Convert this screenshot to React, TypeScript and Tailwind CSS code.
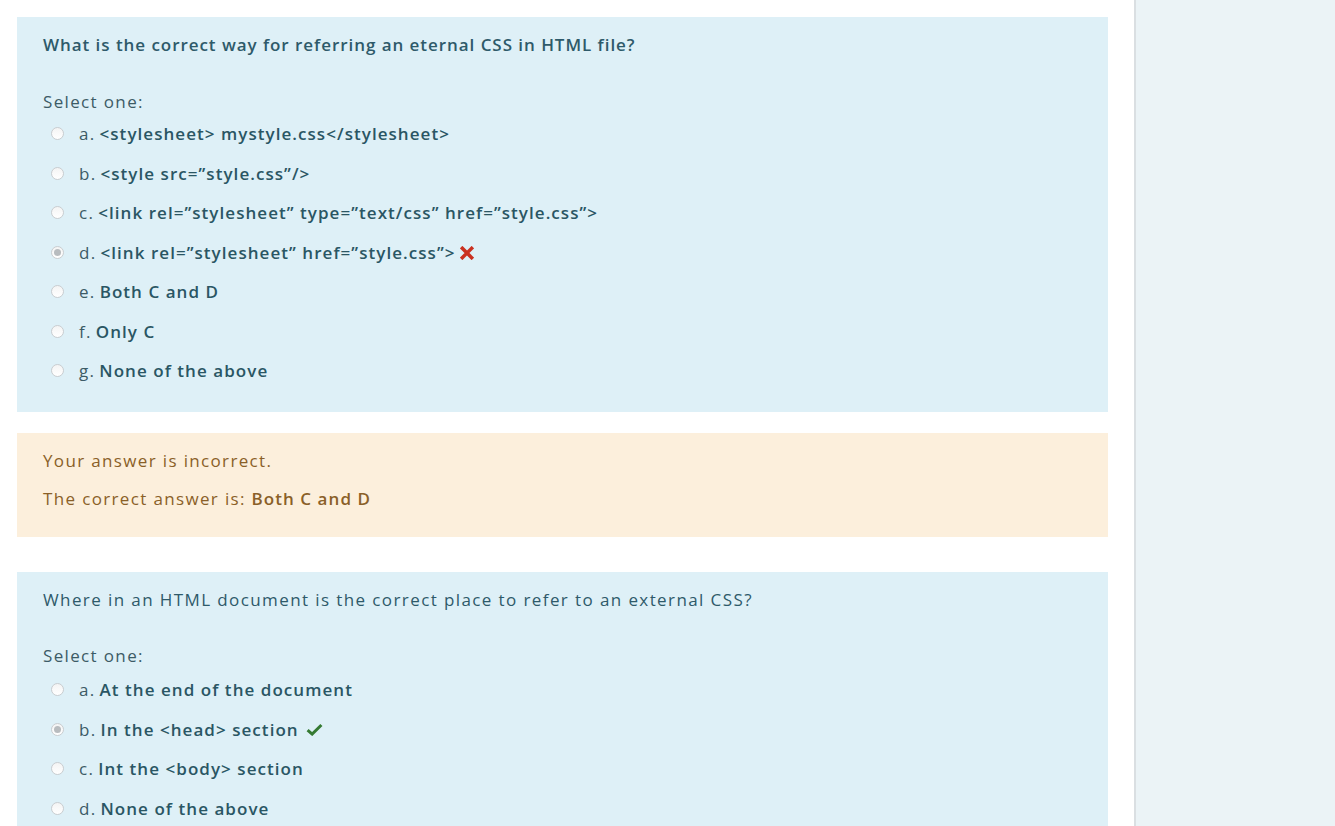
import React from "react";

type Option = { key: string; text: string; checked?: boolean; mark?: "wrong" | "right" };

const q1: Option[] = [
  { key: "a.", text: "<stylesheet> mystyle.css</stylesheet>" },
  { key: "b.", text: "<style src=”style.css”/>" },
  { key: "c.", text: "<link rel=”stylesheet” type=”text/css” href=”style.css”>" },
  { key: "d.", text: "<link rel=”stylesheet” href=”style.css”>", checked: true, mark: "wrong" },
  { key: "e.", text: "Both C and D" },
  { key: "f.", text: "Only C" },
  { key: "g.", text: "None of the above" },
];

const q2: Option[] = [
  { key: "a.", text: "At the end of the document" },
  { key: "b.", text: "In the <head> section", checked: true, mark: "right" },
  { key: "c.", text: "Int the <body> section" },
  { key: "d.", text: "None of the above" },
];

function Radio({ checked }: { checked?: boolean }) {
  return (
    <span className="flex h-[13px] w-[13px] shrink-0 items-center justify-center rounded-full border border-[#c9cdd0] bg-gradient-to-b from-[#f4f4f4] to-white">
      {checked && <span className="h-[7px] w-[7px] rounded-full bg-[#b8bcbf]" />}
    </span>
  );
}

function Cross() {
  return (
    <svg width="14" height="14" viewBox="0 0 12 12" className="ml-[5px] mt-[2px]">
      <path d="M2 2 L10 10 M10 2 L2 10" stroke="#ca3120" strokeWidth="3" strokeLinecap="square" />
    </svg>
  );
}

function Check() {
  return (
    <svg width="17" height="13" viewBox="0 0 16 12" className="ml-[7px] mt-[1px]">
      <path d="M1.5 6.5 L5.8 10.3 L14.5 1.8" stroke="#357a32" strokeWidth="2.8" fill="none" />
    </svg>
  );
}

function Answers({ options }: { options: Option[] }) {
  return (
    <div className="flex flex-col">
      {options.map((o) => (
        <div key={o.key} className="flex h-[39.5px] items-center pl-[8px]">
          <Radio checked={o.checked} />
          <span className="ml-[15px] tracking-[1.3px] text-[#3c5b66]">{o.key}</span>
          <span className="ml-[4px] font-semibold tracking-[1.05px] text-[#2a5664]">{o.text}</span>
          {o.mark === "wrong" && <Cross />}
          {o.mark === "right" && <Check />}
        </div>
      ))}
    </div>
  );
}

export default function App() {
  return (
    <div
      className="flex h-[826px] w-full overflow-hidden bg-white text-[17px]"
      style={{ fontFamily: "'Open Sans', 'Noto Sans', sans-serif" }}
    >
      <main className="flex w-[1134px] shrink-0 flex-col pl-[17px] pr-[26px] pt-[17px]">
        {/* Question 1 */}
        <section className="flex h-[395px] shrink-0 flex-col bg-[#def0f7] px-[26px] pt-[28px]">
          <h2 className="leading-[0px] font-semibold tracking-[0.95px] text-[#2e5a6a]">
            What is the correct way for referring an eternal CSS in HTML file?
          </h2>
          <p className="mt-[57px] leading-[0px] tracking-[1.35px] text-[#3c5b66]">Select one:</p>
          <div className="mt-[12px]">
            <Answers options={q1} />
          </div>
        </section>

        {/* Feedback */}
        <section className="mt-[21px] flex h-[104px] shrink-0 flex-col bg-[#fcefdc] px-[26px] pt-[28px] tracking-[1.35px] text-[#8a5f28]">
          <p className="leading-[0px]">Your answer is incorrect.</p>
          <p className="mt-[38px] leading-[0px]">
            The correct answer is: <span className="font-semibold tracking-[1.05px]">Both C and D</span>
          </p>
        </section>

        {/* Question 2 */}
        <section className="mt-[35px] flex min-h-0 flex-1 flex-col bg-[#def0f7] px-[26px] pt-[28px]">
          <h2 className="leading-[0px] tracking-[1.4px] text-[#2e5a6a]">
            Where in an HTML document is the correct place to refer to an external CSS?
          </h2>
          <p className="mt-[56px] leading-[0px] tracking-[1.35px] text-[#3c5b66]">Select one:</p>
          <div className="mt-[14px]">
            <Answers options={q2} />
          </div>
        </section>
      </main>
      <aside className="flex-1 border-l-2 border-[#dadfe2] bg-[#ebf3f6]" />
    </div>
  );
}
